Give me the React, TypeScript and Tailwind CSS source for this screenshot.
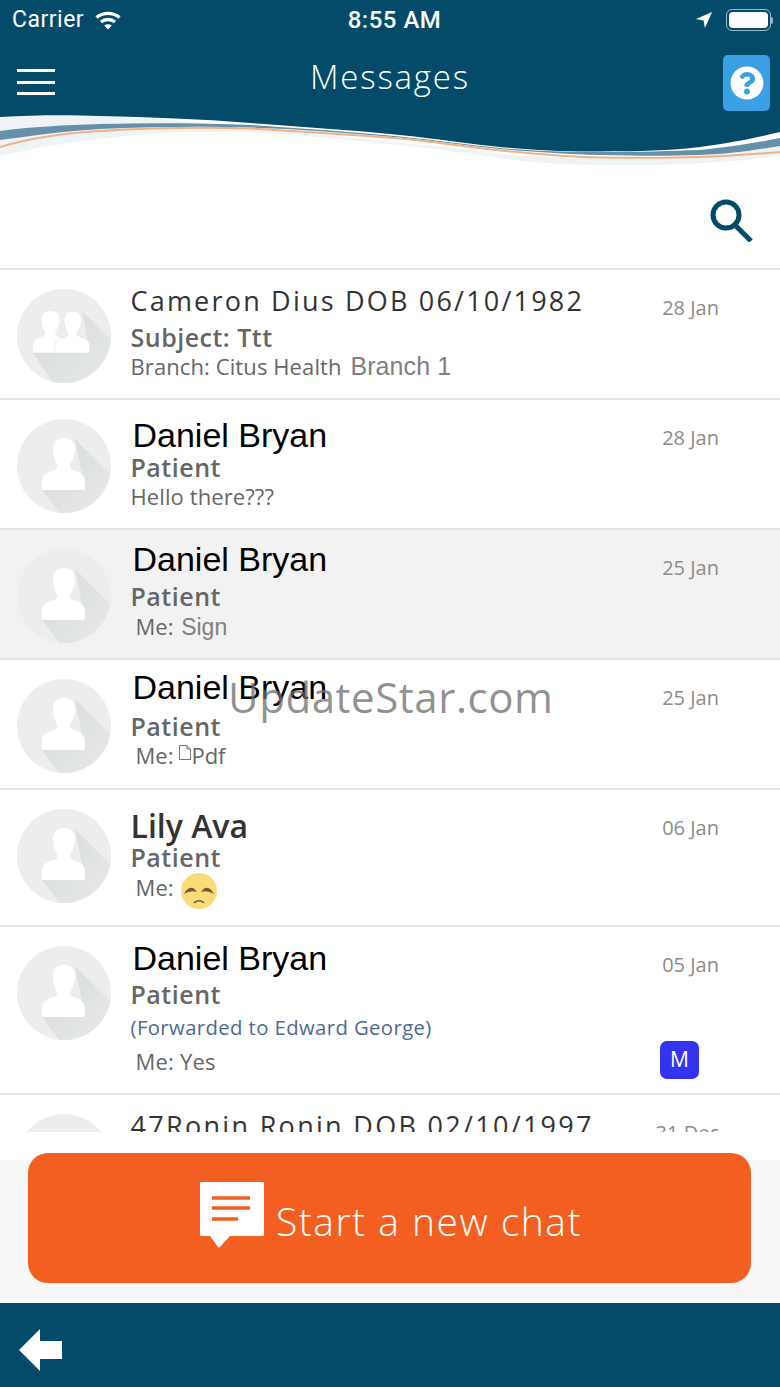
import { FaQuestionCircle } from "react-icons/fa"

const BUST = "M47 19C39 19 36 24 36 31C36 37 38 42 40 45C41 48 40 50 37 51C30 53 25 56 25 62V69Q25 71 27 71H66Q68 71 68 69V62C68 56 63 53 56 51C53 50 52 48 53 45C55 42 58 37 58 31C58 24 55 19 47 19Z"

function Avatar({ group = false }: { group?: boolean }) {
  const clipId = group ? "avatarClipGroup" : "avatarClip"
  const fadeId = group ? "avatarFadeGroup" : "avatarFade"
  return (
    <svg width="94" height="94" viewBox="0 0 94 94" className="shrink-0">
      <defs>
        <clipPath id={clipId}>
          <circle cx="47" cy="47" r="47" />
        </clipPath>
        <linearGradient id={fadeId} x1="0.25" y1="0.25" x2="0.85" y2="0.85">
          <stop offset="0" stopColor="#dcdfdf" />
          <stop offset="1" stopColor="#ebecec" />
        </linearGradient>
      </defs>
      <circle cx="47" cy="47" r="47" fill="#ededed" />
      <g clipPath={`url(#${clipId})`}>
        {group ? (
          <path d="M65 22L120 77L60 130L16 64H73Z" fill={`url(#${fadeId})`} />
        ) : (
          <path d="M58 20L110 72L62 120L25 71H68Z" fill={`url(#${fadeId})`} />
        )}
      </g>
      {group ? (
        <>
          <path d={BUST} transform="translate(-4 6.8) scale(0.8)" fill="#fff" />
          <path d={BUST} transform="translate(17.7 6.6) scale(0.81)" fill="#fff" stroke="#e4e4e4" strokeWidth="1" />
        </>
      ) : (
        <path d={BUST} fill="#fff" />
      )}
    </svg>
  )
}

function Row({
  top,
  date,
  className,
  group,
  badge,
  children,
}: {
  top: string
  date: string
  className: string
  group?: boolean
  badge?: boolean
  children: React.ReactNode
}) {
  return (
    <div className={`flex border-b-2 border-[#e4e6e6] ${className}`}>
      <div className="pl-[17px] pt-[19px]">
        <Avatar group={group} />
      </div>
      <div className={`flex-1 min-w-0 pl-[19.5px] whitespace-nowrap ${top}`}>{children}</div>
      <div className="w-[118px] shrink-0 pr-[61px] pt-[24px] flex flex-col items-end">
        <span className="text-[20px] leading-[27px] text-[#8c8c8c] whitespace-nowrap">{date}</span>
        {badge && (
          <span className="mt-[63px] mr-5 w-[39px] h-[38px] rounded-[7px] bg-[#3333f0] text-white text-[21px] flex items-center justify-center">
            M
          </span>
        )}
      </div>
    </div>
  )
}

const SANS_NAME = "font-['Liberation_Sans'] text-[34px] leading-[38px] text-black ml-0.5 -mt-px mb-px"
const SUB = "text-[25px] leading-[34px] font-semibold text-[#666] tracking-[0.5px]"
const BODY = "text-[22px] leading-[24px] text-[#666] tracking-[0.1px]"
const ME = "text-[22px] leading-[24px] text-[#666] ml-[5px]"

export default function App() {
  return (
    <div className="w-[780px] h-[1387px] flex flex-col bg-white font-['Open_Sans',sans-serif] overflow-hidden relative">
      <header className="bg-[#034b69] text-white">
        <div className="h-[40px] flex items-center justify-between pl-3 pr-[7px] font-['Roboto',sans-serif]">
          <div className="flex items-center gap-[11px] w-[260px] text-[23px]">
            <span className="tracking-[0.5px]">Carrier</span>
            <svg width="26" height="19" viewBox="0 0 26 19" fill="none" stroke="#fff" strokeWidth="3.4">
              <path d="M1.5 6.5C8 1 18 1 24.5 6.5" />
              <path d="M6 11C10 7.6 16 7.6 20 11" />
              <path d="M13 18.5L9.2 14.6C11.4 12.8 14.6 12.8 16.8 14.6Z" fill="#fff" stroke="none" />
            </svg>
          </div>
          <span className="text-[24px] font-medium tracking-[0.5px] ml-[4px]">8:55 AM</span>
          <div className="flex items-center justify-end gap-[13px] w-[260px]">
            <svg width="18" height="18" viewBox="0 0 18 20" fill="#fff" className="-ml-1">
              <path d="M18 1 L10 19 L8.5 10.5 L0 9 Z" />
            </svg>
            <div className="flex items-center">
              <div className="w-[45px] h-[22px] rounded-[6px] border border-[#9fb7c3] p-[2px]">
                <div className="w-full h-full rounded-[4px] bg-white" />
              </div>
              <div className="w-[2px] h-[7px] bg-[#9fb7c3] rounded-r-sm" />
            </div>
          </div>
        </div>
        <div className="h-[70px] flex items-start justify-between pl-[17px] pr-[10px] relative">
          <div className="flex flex-col gap-[8.5px] w-[38px] pt-[29px]">
            <div className="h-[3px] bg-white" />
            <div className="h-[3px] bg-white" />
            <div className="h-[3px] bg-white" />
          </div>
          <h1 className="absolute left-[310px] top-[14px] text-[33px] leading-[46px] font-light tracking-[1.8px]">
            Messages
          </h1>
          <div className="w-[47px] h-[56px] rounded-[5px] bg-[#3a9fe3] flex items-center justify-center mt-[15px]">
            <FaQuestionCircle size={34} color="#fff" />
          </div>
        </div>
      </header>

      {/* swoosh under the nav bar */}
      <svg width="780" height="60" viewBox="0 0 780 60" className="block shrink-0">
        <path d="M0 7C60 3 150 6 250 18C330 27 430 34 500 44C560 50 680 52 780 36V46C690 58 560 58 500 48C420 36 340 28 250 22C150 20 70 30 0 46Z" fill="#eef3f6" />
        <path d="M0 21C30 17 65 15 100 14C150 13 200 13 250 15C300 18 350 22 400 26.5C435 30 470 35 500 38C535 41 565 42 600 42C640 42 670 41 700 40C730 37 755 33 780 28V36C755 40 730 44 700 45C670 46 640 46 600 45C565 44 535 42 500 39C470 36 435 31 400 27.5C350 23 300 19 250 17.5C200 16 150 17 100 19C65 21 30 26 0 30Z" fill="#6690aa" />
        <path d="M0 37C30 28 65 23 100 21C150 18 200 17 250 18.5C300 21 350 25 400 28.5C435 32 470 37 500 40.5C535 44 565 47 600 47.5C640 48 670 48 700 47C730 46 755 44 780 42" fill="none" stroke="#f2b183" strokeWidth="2" />
        <path d="M0 7C35 5 70 5 100 6C150 7 200 9 250 13C300 17 350 20 400 25C440 29 470 34 500 37C535 40 565 42 600 41.5C640 41 670 41 700 37C730 33 755 28 780 22V0H0Z" fill="#034b69" />
      </svg>

      <div className="h-[100px] shrink-0 flex justify-end items-start pr-[27px] pt-[28px] border-b-2 border-[#e4e6e6]">
        <svg width="44" height="44" viewBox="0 0 44 44" fill="none" stroke="#034b69">
          <circle cx="17" cy="17" r="13" strokeWidth="5" />
          <path d="M26 27L42 43" strokeWidth="5" />
        </svg>
      </div>

      <div className="h-[862px] shrink-0 overflow-hidden">
        <Row top="pt-[12px]" date="28 Jan" className="h-[130px]" group>
          <p className="text-[27px] leading-[38px] text-[#333] tracking-[2.2px]">Cameron Dius DOB 06/10/1982</p>
          <p className={SUB}>Subject: Ttt</p>
          <p className={BODY}>
            Branch: Citus Health{" "}
            <span className="font-['Liberation_Sans'] text-[25px] text-[#808080] ml-[3px]">Branch 1</span>
          </p>
        </Row>
        <Row top="pt-[17px]" date="28 Jan" className="h-[130px]">
          <p className={SANS_NAME}>Daniel Bryan</p>
          <p className={SUB + " -mt-[5px]"}>Patient</p>
          <p className={BODY}>Hello there???</p>
        </Row>
        <Row top="pt-[11px]" date="25 Jan" className="h-[130px] bg-[#f2f2f2]">
          <p className={SANS_NAME}>Daniel Bryan</p>
          <p className={SUB + " mt-[1px]"}>Patient</p>
          <p className={ME + " mt-[1px]"}>
            Me: <span className="font-['Liberation_Sans'] text-[23px] text-[#808080] ml-[2px]">Sign</span>
          </p>
        </Row>
        <Row top="pt-[9px]" date="25 Jan" className="h-[130px]">
          <p className={SANS_NAME}>Daniel Bryan</p>
          <p className={SUB + " mt-[3px]"}>Patient</p>
          <p className={ME + " flex items-center"}>
            Me:
            <svg width="12" height="15" viewBox="0 0 12 15" fill="none" stroke="#777" className="ml-[6px] -mt-[6px]">
              <path d="M.5.5H8L11.5 4V14.5H.5ZM8 .5V4H11.5" />
            </svg>
            Pdf
          </p>
        </Row>
        <Row top="pt-[17px]" date="06 Jan" className="h-[137px]">
          <p className="text-[32px] leading-[38px] font-semibold text-[#333]">Lily Ava</p>
          <p className={SUB + " -mt-[5px]"}>Patient</p>
          <div className="flex items-start ml-[5px] mt-[1px]">
            <span className={BODY}>Me:</span>
            <svg width="36" height="36" viewBox="0 0 36 36" className="ml-[7px] -mt-[2px]">
              <circle cx="18" cy="18" r="18" fill="#fbdb78" />
              <path d="M3 21C6 14 12 12 16 19C12 17.5 8 18 3 21Z" fill="#6e5a3a" />
              <path d="M33 21C30 14 24 12 20 19C24 17.5 28 18 33 21Z" fill="#6e5a3a" />
              <path d="M13 30C15 27 21 27 23 30" fill="none" stroke="#6e5a3a" strokeWidth="1.6" />
            </svg>
          </div>
        </Row>
        <Row top="pt-[13px]" date="05 Jan" className="h-[168px]" badge>
          <p className={SANS_NAME}>Daniel Bryan</p>
          <p className={SUB + " -mt-[1px]"}>Patient</p>
          <p className="text-[20.3px] leading-[30px] text-[#4d6a8f] tracking-[0.4px] mt-[1px]">(Forwarded to Edward George)</p>
          <p className="text-[22px] leading-[30px] text-[#666] ml-[5px] tracking-[0.2px] mt-[4px]">Me: Yes</p>
        </Row>
        <Row top="pt-[12px]" date="31 Dec" className="h-[130px]">
          <p className="text-[27px] leading-[38px] text-[#333] tracking-[2.3px]">47Ronin Ronin DOB 02/10/1997</p>
        </Row>
      </div>

      <div className="h-[28px] shrink-0 bg-white" />

      <div className="h-[143px] shrink-0 bg-[#f8f8f8] px-[28px]">
        <button className="w-[723px] h-[130px] -mt-[7px] rounded-[20px] bg-[#f25f21] text-white flex items-start justify-center gap-3 pl-[3px]">
          <svg width="64" height="66" viewBox="0 0 64 66" className="mt-[29px] shrink-0">
            <path d="M1 0H63a1 1 0 0 1 1 1V53a1 1 0 0 1-1 1H30L20 65Q19 66 18 65L10 54H1a1 1 0 0 1-1-1V1a1 1 0 0 1 1-1Z" fill="#fff" />
            <path d="M12 16H50M12 26H50M12 37H38" stroke="#f25f21" strokeWidth="3.5" />
          </svg>
          <span className="text-[39px] leading-[54px] font-light tracking-[1.5px] mt-[41px]">Start a new chat</span>
        </button>
      </div>

      <div className="flex-1 bg-[#034b69] flex items-start pl-[19px] pt-[26px]">
        <svg width="43" height="42" viewBox="0 0 43 42" fill="#fff">
          <path d="M21 0V12H43V30H21V42L0 21Z" />
        </svg>
      </div>

      <span className="absolute left-[228px] top-[668px] text-[42px] leading-[58px] text-[#6e6e6e]/75 tracking-[0.55px] pointer-events-none">
        UpdateStar.com
      </span>
    </div>
  )
}
